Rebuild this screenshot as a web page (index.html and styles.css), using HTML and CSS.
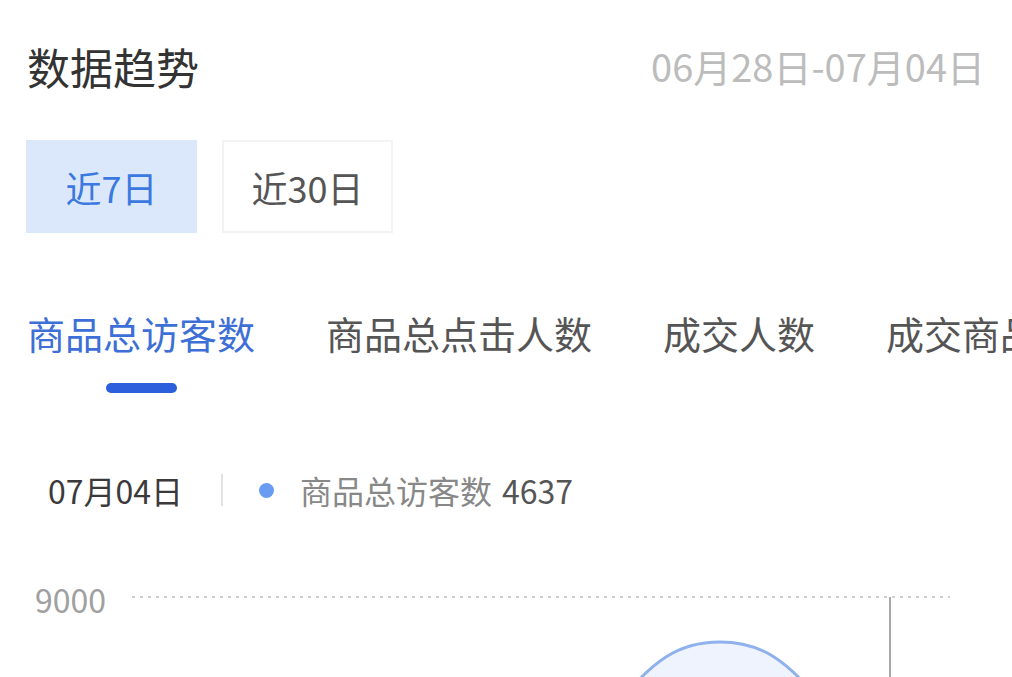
FILE: index.html
```html
<!DOCTYPE html>
<html lang="zh-CN">

<head>

    <meta charset="UTF-8">
    <meta name="viewport" content="width=device-width, initial-scale=1.0">
    <title>数据趋势</title>

    <link rel="stylesheet" href="styles.css">

</head>

<body>

    <div class="trend">

        <div class="trend-header">
            <span class="trend-title">数据趋势</span>
            <span class="trend-range">06月28日-07月04日</span>
        </div>

        <div class="periods">
            <span class="period active">近7日</span>
            <span class="period">近30日</span>
        </div>

        <div class="tabs">
            <div class="tab active">
                <span>商品总访客数</span>
                <i class="tab-bar"></i>
            </div>
            <div class="tab"><span>商品总点击人数</span></div>
            <div class="tab"><span>成交人数</span></div>
            <div class="tab"><span>成交商品件数</span></div>
        </div>

        <div class="readout">
            <span class="readout-date">07月04日</span>
            <span class="readout-sep"></span>
            <span class="readout-dot"></span>
            <span class="readout-label">商品总访客数</span>
            <span class="readout-value">4637</span>
        </div>

        <div class="chart">
            <span class="axis-label">9000</span>
            <svg class="plot" width="880" height="92" viewBox="0 0 880 92">
                <line x1="0" y1="12" x2="818" y2="12" stroke="#cfcfcf" stroke-width="2" stroke-dasharray="3 5" />
                <path d="M 470 140 C 520 70 550 57 588 57 C 626 57 656 70 706 140 Z" fill="#eef3fd" />
                <path d="M 470 140 C 520 70 550 57 588 57 C 626 57 656 70 706 140" fill="none" stroke="#8fb1ec" stroke-width="3" />
                <line x1="758" y1="12" x2="758" y2="92" stroke="#a8a8a8" stroke-width="2" />
            </svg>
        </div>

    </div>

</body>

</html>
```

FILE: styles.css
```css
html,
body {
    width: 100%;
    height: 100%;
    margin: 0px;
    overflow: hidden;
}

body {
    background-color: #fff;
    font-family: "Noto Sans CJK SC", "Noto Sans", sans-serif;
}

.trend {
    padding: 44px 27px 0 26px;
    display: flex;
    flex-direction: column;
}

.trend-header {
    display: flex;
    justify-content: space-between;
    align-items: center;
}

.trend-title {
    font-size: 43px;
    line-height: 44px;
    color: #333;
    padding-left: 1px;
}

.trend-range {
    font-size: 38px;
    line-height: 40px;
    color: #bcbcbc;
}

.periods {
    display: flex;
    gap: 25px;
    margin-top: 52px;
}

.period {
    width: 171px;
    height: 93px;
    box-sizing: border-box;
    display: flex;
    justify-content: center;
    align-items: center;
    font-size: 36px;
    color: #555;
    border: 2px solid #f3f3f3;
}

.period.active {
    background-color: #dbe8fb;
    border-color: #dbe8fb;
    color: #3b78e0;
}

.tabs {
    display: flex;
    gap: 71px;
    margin-top: 72px;
    margin-right: -27px;
    padding-left: 1px;
    overflow: hidden;
    white-space: nowrap;
}

.tab {
    display: flex;
    flex-direction: column;
    align-items: center;
    flex-shrink: 0;
    font-size: 38px;
    line-height: 56px;
    color: #555;
}

.tab.active {
    color: #3d6fd7;
}

.tab-bar {
    width: 71px;
    height: 10px;
    border-radius: 5px;
    margin-top: 22px;
    background-color: #2b5fdb;
}

.readout {
    display: flex;
    align-items: center;
    margin-top: 80px;
    padding-left: 22px;
    font-size: 32px;
    line-height: 34px;
    color: #888;
}

.readout-date {
    color: #3a3a3a;
}

.readout-sep {
    width: 2px;
    height: 32px;
    background-color: #e2e2e2;
    margin: 0 36px 0 38px;
}

.readout-dot {
    width: 15px;
    height: 15px;
    border-radius: 50%;
    background-color: #6a9bf2;
    margin-right: 26px;
}

.readout-value {
    color: #555;
    margin-left: 10px;
}

.chart {
    display: flex;
    align-items: flex-start;
    margin-top: 78px;
    margin-right: -27px;
}

.axis-label {
    width: 106px;
    padding-left: 9px;
    box-sizing: border-box;
    font-size: 32px;
    line-height: 28px;
    color: #a0a0a0;
}

.plot {
    display: block;
    flex-shrink: 0;
}
```
